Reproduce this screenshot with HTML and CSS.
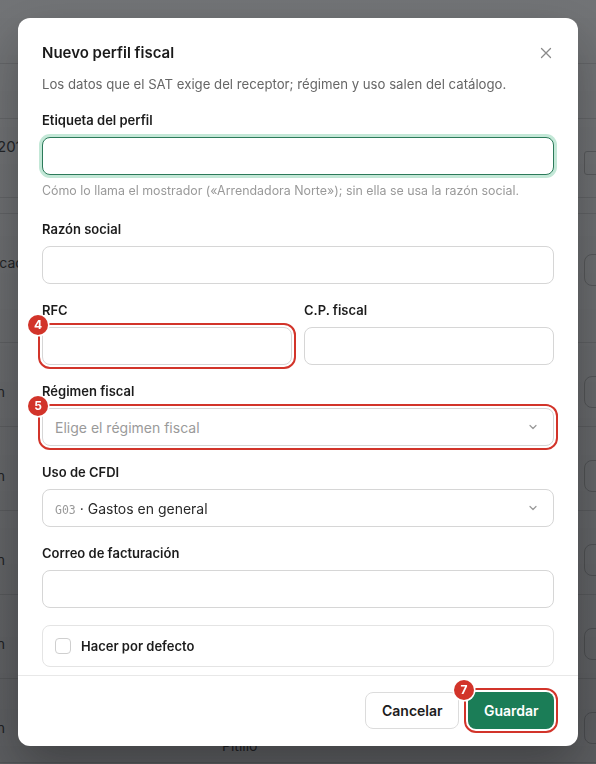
FILE: index.html
```html
<!DOCTYPE html>
<html lang="es">
<head>
    <meta charset="UTF-8">
    <meta name="viewport" content="width=device-width, initial-scale=1.0">
    <title>Perfiles fiscales</title>
    <link rel="stylesheet" href="styles.css">
</head>
<body>
    <!-- Page behind the dialog -->
    <div class="page">
        <header class="topbar"><span class="brand">Facturas</span></header>
        <div class="toolbar"></div>
        <section class="period">
            <span class="period-year">2019</span>
            <span class="period-chip"></span>
        </section>
        <div class="thead"></div>
        <div class="trow trow-tall"><span class="cell cell-first">Identificación</span><span class="row-btn"></span></div>
        <div class="trow"><span class="cell">Ubicación</span><span class="row-btn"></span></div>
        <div class="trow"><span class="cell">Ubicación</span><span class="row-btn"></span></div>
        <div class="trow"><span class="cell">Ubicación</span><span class="row-btn"></span></div>
        <div class="trow"><span class="cell">Ubicación</span><span class="row-btn"></span></div>
        <div class="trow"><span class="cell">Ubicación</span><span class="cell-mid">Pitillo</span><span class="row-btn"></span></div>
    </div>

    <!-- New fiscal profile dialog -->
    <div class="overlay">
        <div class="modal" role="dialog" aria-labelledby="modal-title">
            <div class="modal-head">
                <div class="modal-title-row">
                    <h2 id="modal-title">Nuevo perfil fiscal</h2>
                    <button class="close-btn" aria-label="Cerrar">
                        <svg width="12" height="12" viewBox="0 0 12 12"><path d="M1.5 1.5l9 9M10.5 1.5l-9 9" stroke="currentColor" stroke-width="1.3" stroke-linecap="round"/></svg>
                    </button>
                </div>
                <p class="modal-sub">Los datos que el SAT exige del receptor; régimen y uso salen del catálogo.</p>
            </div>

            <form class="modal-body">
                <div class="field">
                    <label>Etiqueta del perfil</label>
                    <input class="control is-focused" type="text">
                    <p class="hint">Cómo lo llama el mostrador («Arrendadora Norte»); sin ella se usa la razón social.</p>
                </div>

                <div class="field">
                    <label>Razón social</label>
                    <input class="control" type="text">
                </div>

                <div class="field-row">
                    <div class="field">
                        <label>RFC</label>
                        <div class="mark">
                            <input class="control flagged" type="text">
                            <span class="step">4</span>
                        </div>
                    </div>
                    <div class="field">
                        <label>C.P. fiscal</label>
                        <input class="control" type="text">
                    </div>
                </div>

                <div class="field">
                    <label>Régimen fiscal</label>
                    <div class="mark">
                        <button type="button" class="control select flagged">
                            <span class="placeholder">Elige el régimen fiscal</span>
                            <svg class="chevron" width="12" height="12" viewBox="0 0 12 12"><path d="M3 4.5l3 3 3-3" fill="none" stroke="currentColor" stroke-width="1.2" stroke-linecap="round" stroke-linejoin="round"/></svg>
                        </button>
                        <span class="step">5</span>
                    </div>
                </div>

                <div class="field">
                    <label>Uso de CFDI</label>
                    <button type="button" class="control select">
                        <span><code class="code">G03</code> · Gastos en general</span>
                        <svg class="chevron" width="12" height="12" viewBox="0 0 12 12"><path d="M3 4.5l3 3 3-3" fill="none" stroke="currentColor" stroke-width="1.2" stroke-linecap="round" stroke-linejoin="round"/></svg>
                    </button>
                </div>

                <div class="field">
                    <label>Correo de facturación</label>
                    <input class="control" type="email">
                </div>

                <label class="check-card">
                    <input type="checkbox">
                    <span>Hacer por defecto</span>
                </label>
            </form>

            <div class="modal-foot">
                <button class="btn btn-ghost">Cancelar</button>
                <div class="mark">
                    <button class="btn btn-primary flagged">Guardar</button>
                    <span class="step">7</span>
                </div>
            </div>
        </div>
    </div>
</body>
</html>
```
FILE: styles.css
```css
body {
    margin: 0;
    font-family: Inter, "Noto Sans", sans-serif;
    color: #1c1c1c;
    overflow: hidden;
}

/* background page */
.page {
    background: #fafafa;
    min-height: 100vh;
    color: #222;
}
.topbar {
    height: 64px;
    border-bottom: 1px solid #d8d8d8;
    padding: 20px 30px;
    box-sizing: border-box;
}
.brand {
    font-weight: 600;
}
.toolbar {
    height: 54px;
    border-bottom: 1px solid #d8d8d8;
}
.period {
    height: 79px;
    border-bottom: 1px solid #d8d8d8;
    display: flex;
    justify-content: space-between;
    padding-top: 16px;
    box-sizing: border-box;
}
.period-year {
    font-size: 15px;
    margin: 2px 0 0 -3px;
}
.period-chip {
    width: 30px;
    height: 22px;
    border: 1px solid #bbb;
    border-radius: 3px;
    margin: 16px -20px 0 0;
}
.thead {
    height: 15px;
    border-bottom: 1px solid #d8d8d8;
}
.trow {
    height: 84px;
    border-bottom: 1px solid #d8d8d8;
    display: flex;
    align-items: center;
    font-size: 14px;
    padding-top: 14px;
    box-sizing: border-box;
}
.trow-tall {
    height: 129px;
    align-items: flex-start;
    padding-top: 40px;
}
/* first column is scrolled mostly out of view */
.cell {
    width: 70px;
    margin-left: -65px;
    text-align: right;
    white-space: nowrap;
}
.cell-first {
    width: auto;
    margin-left: -46px;
    text-align: left;
}
.cell-mid {
    margin-left: 217px;
    align-self: flex-end;
    margin-bottom: 8px;
}
.row-btn {
    margin-left: auto;
    margin-right: -40px;
    width: 50px;
    height: 30px;
    border: 1px solid #bbb;
    border-radius: 8px;
}

/* dialog */
.overlay {
    position: fixed;
    inset: 0;
    background: linear-gradient(rgba(38, 41, 45, 0.64), rgba(30, 32, 36, 0.72));
    display: flex;
    align-items: center;
    justify-content: center;
}
.modal {
    width: 560px;
    height: 728px;
    background: #fff;
    border-radius: 12px;
    display: flex;
    flex-direction: column;
    box-shadow: 0 20px 50px rgba(0, 0, 0, 0.3);
    overflow: hidden;
}
.modal-head {
    padding: 24px 24px 0;
}
.modal-title-row {
    display: flex;
    justify-content: space-between;
    align-items: center;
}
.modal-title-row h2 {
    margin: 0;
    font-size: 15px;
    line-height: 22px;
    font-weight: 600;
    color: #1a1a1a;
}
.close-btn {
    border: none;
    background: none;
    padding: 0;
    margin-right: 2px;
    color: #8a8a8a;
    display: flex;
}
.modal-sub {
    margin: 10px 0 0;
    font-size: 13.2px;
    line-height: 20px;
    color: #666;
}
.modal-body {
    flex: 1;
    overflow-y: auto;
    scrollbar-width: none;
    padding: 17px 24px 24px;
    display: flex;
    flex-direction: column;
    gap: 17px;
    margin: 0;
}
.field {
    display: flex;
    flex-direction: column;
    flex: 1;
}
.field label {
    font-size: 13px;
    line-height: 18px;
    font-weight: 600;
    color: #1c1c1c;
    margin-bottom: 8px;
}
.field-row {
    display: flex;
    gap: 12px;
}
.control {
    box-sizing: border-box;
    width: 100%;
    height: 38px;
    border: 1px solid #d6d6d6;
    border-radius: 8px;
    background: #fff;
    font-family: inherit;
    font-size: 14px;
    padding: 0 12px;
    color: #2a2a2a;
}
.control.is-focused {
    border: 1.5px solid #2c7a5a;
    box-shadow: 0 0 0 3px #c3e8d7;
    outline: none;
}
.hint {
    margin: 8px 0 4px;
    font-size: 12.4px;
    line-height: 16px;
    color: #999;
}
.select {
    display: flex;
    align-items: center;
    justify-content: space-between;
    text-align: left;
}
.placeholder {
    color: #9a9a9a;
}
.chevron {
    color: #999;
    margin-right: 2px;
}
.code {
    font-family: "DejaVu Sans Mono", "Liberation Mono", monospace;
    font-size: 11.5px;
    color: #999;
}
.check-card {
    display: flex;
    align-items: center;
    gap: 10px;
    border: 1px solid #e4e4e4;
    border-radius: 8px;
    padding: 12px;
    font-size: 13px;
    font-weight: 600;
    color: #1c1c1c;
    flex-shrink: 0;
}
.check-card input {
    appearance: none;
    width: 16px;
    height: 16px;
    margin: 0;
    border: 1px solid #cfcfcf;
    border-radius: 4px;
    background: #fff;
}

.modal-foot {
    border-top: 1px solid #e8e8e8;
    padding: 16px 24px 17px;
    display: flex;
    justify-content: flex-end;
    gap: 9px;
}
.btn {
    height: 37px;
    border-radius: 8px;
    font-family: inherit;
    font-size: 14px;
    font-weight: 600;
    padding: 0 16px;
}
.btn-ghost {
    width: 94px;
    border: 1px solid #dcdcdc;
    background: #fff;
    color: #1c1c1c;
}
.btn-primary {
    width: 86px;
    border: none;
    background: #1b7d57;
    color: #fff;
}

/* numbered review markers */
.mark {
    position: relative;
}
.flagged {
    outline: 2px solid #d2342a;
    outline-offset: 2px;
}
.step {
    position: absolute;
    left: -14px;
    top: -12px;
    width: 20px;
    height: 20px;
    border-radius: 50%;
    background: #d2342a;
    box-shadow: 0 0 0 1.5px #fff;
    color: #fff;
    font-size: 12px;
    font-weight: 700;
    line-height: 20px;
    text-align: center;
}
```
